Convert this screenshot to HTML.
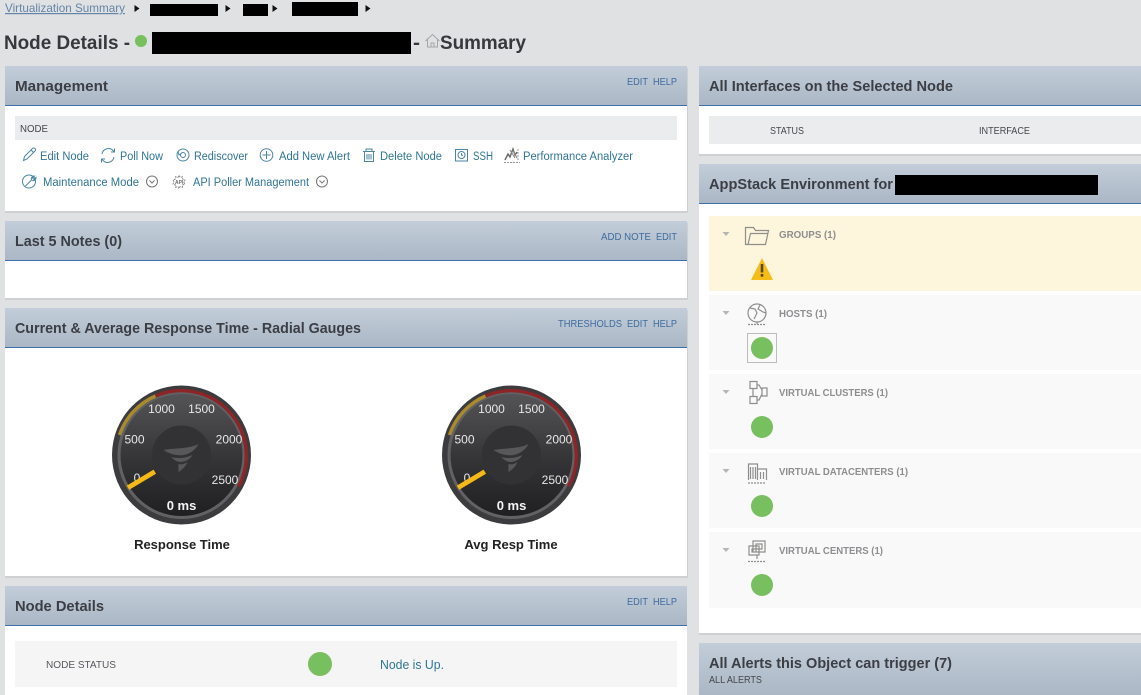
<!DOCTYPE html>
<html><head><meta charset="utf-8"><style>
html,body{margin:0;padding:0;background:#e0e1e3;overflow:hidden}
svg{display:block;position:absolute;left:0;top:0}
text{font-family:"Liberation Sans",sans-serif}
.h{font-size:15px;font-weight:bold;fill:#3b3e44}
.t{font-size:19px;font-weight:bold;fill:#35383d}
.l{font-size:10px;fill:#3e6c9e}
.a{font-size:11.5px;fill:#2f7596}
.s{font-size:10.5px;fill:#44474b}
.g{font-size:10px;font-weight:bold;fill:#8d8e90}
.n{font-size:12px;fill:#e8e8e8;text-anchor:middle}
.ic{fill:none;stroke:#4d86a3;stroke-width:1}
.ig{fill:none;stroke:#8e8e8c;stroke-width:1.2}
</style></head><body>
<svg width="1141" height="695" viewBox="0 0 1141 695" xmlns="http://www.w3.org/2000/svg">
<defs>
<linearGradient id="hd" x1="0" y1="0" x2="0" y2="1"><stop offset="0" stop-color="#c3cdda"/><stop offset="1" stop-color="#abb7c5"/></linearGradient>
<linearGradient id="gf" x1="0" y1="0" x2="0" y2="1"><stop offset="0" stop-color="#555557"/><stop offset=".55" stop-color="#343436"/><stop offset="1" stop-color="#1f1f21"/></linearGradient>
<g id="gauge">
<circle cx="0" cy="0" r="69.5" fill="#3c3c3f"/>
<circle cx="0" cy="0" r="62.500" fill="url(#gf)" stroke="#626265" stroke-width="3"/>
<path d="M-62,-20 A65,65 0 0 1 -26,-59" fill="none" stroke="#a98a2c" stroke-width="3.400"/>
<path d="M-26,-59 A65,65 0 0 1 57,31.5" fill="none" stroke="#8c2527" stroke-width="3.400"/>
<circle cx="0" cy="0" r="29.5" fill="#323234"/>
<path d="M-18,-5 C-8,-7 8,-6 17,-11 C14,-5 8,-1 2,0 C-5,1 -12,-1 -18,-5Z M-10,2 C-4,4 5,3 11,0 C8,5 3,7 -1,7 C-4,7 -8,5 -10,2Z M-3,9 C0,10 3,9 6,7 C4,12 0,15 -3,17 C-3,14 -3,12 -3,9Z" fill="#58585a"/>
<text class="n" x="-47" y="-11.5">500</text>
<text class="n" x="-20" y="-42">1000</text>
<text class="n" x="20" y="-42">1500</text>
<text class="n" x="47.5" y="-11.5">2000</text>
<text class="n" x="43.5" y="29">2500</text>
<text class="n" x="-44.5" y="27">0</text>
<line x1="-53.500" y1="32.700" x2="-26.700" y2="16.700" stroke="#f6b816" stroke-width="4.800"/>
<text x="0" y="55" text-anchor="middle" style="font-size:13px;font-weight:bold;fill:#f4f4f4">0 ms</text>
</g>
</defs>

<rect width="1141" height="695" fill="#e0e1e3"/>

<!-- breadcrumb -->
<text x="5" y="12" style="font-size:12px;fill:#6484a8;text-decoration:underline" textLength="120" lengthAdjust="spacingAndGlyphs">Virtualization Summary</text>
<path d="M134.500,5l5,3.500l-5,3.500z M225.500,5l5,3.500l-5,3.500z M272.500,5l5,3.500l-5,3.500z M365.500,5l5,3.500l-5,3.500z" fill="#111"/>
<rect x="150" y="4" width="68" height="12" fill="#000"/>
<rect x="243" y="4" width="25" height="12" fill="#000"/>
<rect x="292" y="2" width="66" height="14" fill="#000"/>

<!-- title -->
<text class="t" x="4" y="49" textLength="126" lengthAdjust="spacingAndGlyphs">Node Details -</text>
<circle cx="141" cy="41" r="6" fill="#77bf5f"/>
<rect x="152" y="32" width="259" height="22" fill="#000"/>
<text class="t" x="413" y="49" textLength="7" lengthAdjust="spacingAndGlyphs">-</text>
<path d="M425.500,41l7,-6.500l7,6.500M427.500,39.500v7.500h10v-7.500M431,47v-4h3v4" fill="none" stroke="#a5a5a5" stroke-width="1"/>
<text class="t" x="440" y="49" textLength="86" lengthAdjust="spacingAndGlyphs">Summary</text>

<!-- left panels -->
<rect x="5" y="68" width="683" height="145" fill="#cfd0d2"/>
<rect x="5" y="66" width="682" height="145" fill="#fff"/>
<rect x="5" y="66" width="682" height="39" fill="url(#hd)"/>
<rect x="5" y="105" width="682" height="1" fill="#3f70ae"/>
<text class="h" x="15" y="91" textLength="93" lengthAdjust="spacingAndGlyphs">Management</text>
<text class="l" x="627" y="85" textLength="21" lengthAdjust="spacingAndGlyphs">EDIT</text>
<text class="l" x="653" y="85" textLength="24" lengthAdjust="spacingAndGlyphs">HELP</text>
<rect x="15" y="116" width="662" height="24" fill="#ebecee"/>
<text class="s" x="20" y="132" textLength="28" lengthAdjust="spacingAndGlyphs">NODE</text>

<!-- action icons -->
<path class="ic" d="M23.500,160.500l1,-4l8,-8a1.500,1.500 0 0 1 2.500,2.500l-8,8z M31,150l2.500,2.500"/>
<path class="ic" d="M102,154a6.500,6.500 0 0 1 11,-3.500l1.500,1.500M114,157a6.500,6.500 0 0 1 -11,3.500l-1.500,-1.500M114.500,148.500v3.500h-3.500M101.500,162.500v-3.500h3.500"/>
<circle class="ic" cx="183" cy="155" r="6"/><circle class="ic" cx="183" cy="155" r="2.500"/><path class="ic" d="M178,151l1,4l3,-2"/>
<circle class="ic" cx="266.500" cy="155" r="6.300"/><path class="ic" d="M266.500,151v8M262.500,155h8"/>
<path class="ic" d="M363,151.500h12M366,151.500v-2.500h6v2.500M364.500,151.500v10h9v-10M367,154v5.500M369,154v5.500M371,154v5.500"/>
<rect class="ic" x="455.500" y="149.500" width="12" height="11.500"/><circle class="ic" cx="461.500" cy="155" r="3.500"/><path class="ic" d="M461.500,153v2.200h1.500"/>
<path d="M505,160l3,-6l2,3l3,-8l2,6l2,-3" fill="none" stroke="#666" stroke-width="1.400"/><path d="M510,150l5,8M513,150l4,8" fill="none" stroke="#888" stroke-width="1"/><path d="M518,149v11M504,162.500h16" fill="none" stroke="#999" stroke-width="1" stroke-dasharray="2 1"/>
<circle class="ic" cx="29" cy="181.500" r="6.500"/><path class="ic" d="M25.500,186l6,-6a3,3 0 0 1 3,-4l-2,2l1.500,1.500l2,-2a3,3 0 0 1 -4,3"/>
<path d="M179,175.500l1.200,2l2.300,-.7l.2,2.300l2.300,.9l-1.300,2l1.300,2l-2.300,.9l-.2,2.300l-2.300,-.7l-1.200,2l-1.200,-2l-2.300,.7l-.2,-2.300l-2.300,-.9l1.300,-2l-1.300,-2l2.300,-.9l.2,-2.300l2.300,.7z" fill="none" stroke="#888" stroke-width="1" stroke-dasharray="2 1"/>
<text x="175" y="184" style="font-size:5px;font-weight:bold;fill:#666">API</text>
<circle class="ic" cx="152" cy="181.500" r="5.500" style="stroke:#777"/><path d="M149.500,180.500l2.500,2.500l2.500,-2.500" fill="none" stroke="#777"/>
<circle class="ic" cx="322" cy="181.500" r="5.500" style="stroke:#777"/><path d="M319.500,180.500l2.500,2.500l2.500,-2.500" fill="none" stroke="#777"/>

<text class="a" x="40" y="160" textLength="49" lengthAdjust="spacingAndGlyphs">Edit Node</text>
<text class="a" x="120" y="160" textLength="43" lengthAdjust="spacingAndGlyphs">Poll Now</text>
<text class="a" x="194" y="160" textLength="54" lengthAdjust="spacingAndGlyphs">Rediscover</text>
<text class="a" x="279" y="160" textLength="71" lengthAdjust="spacingAndGlyphs">Add New Alert</text>
<text class="a" x="380" y="160" textLength="62" lengthAdjust="spacingAndGlyphs">Delete Node</text>
<text class="a" x="473" y="160" textLength="20" lengthAdjust="spacingAndGlyphs">SSH</text>
<text class="a" x="523" y="160" textLength="110" lengthAdjust="spacingAndGlyphs">Performance Analyzer</text>
<text class="a" x="43" y="186" textLength="96" lengthAdjust="spacingAndGlyphs">Maintenance Mode</text>
<text class="a" x="193" y="186" textLength="116" lengthAdjust="spacingAndGlyphs">API Poller Management</text>

<rect x="5" y="223" width="683" height="77" fill="#cfd0d2"/>
<rect x="5" y="221" width="682" height="77" fill="#fff"/>
<rect x="5" y="221" width="682" height="39" fill="url(#hd)"/>
<rect x="5" y="260" width="682" height="1" fill="#3f70ae"/>
<text class="h" x="15" y="246" textLength="107" lengthAdjust="spacingAndGlyphs">Last 5 Notes (0)</text>
<text class="l" x="601" y="240" textLength="50" lengthAdjust="spacingAndGlyphs">ADD NOTE</text>
<text class="l" x="656" y="240" textLength="21" lengthAdjust="spacingAndGlyphs">EDIT</text>

<rect x="5" y="310" width="683" height="268" fill="#cfd0d2"/>
<rect x="5" y="308" width="682" height="268" fill="#fff"/>
<rect x="5" y="308" width="682" height="39" fill="url(#hd)"/>
<rect x="5" y="347" width="682" height="1" fill="#3f70ae"/>
<text class="h" x="15" y="333" textLength="346" lengthAdjust="spacingAndGlyphs">Current &amp; Average Response Time - Radial Gauges</text>
<text class="l" x="558" y="327" textLength="64" lengthAdjust="spacingAndGlyphs">THRESHOLDS</text>
<text class="l" x="627" y="327" textLength="21" lengthAdjust="spacingAndGlyphs">EDIT</text>
<text class="l" x="653" y="327" textLength="24" lengthAdjust="spacingAndGlyphs">HELP</text>

<use href="#gauge" x="181.500" y="455"/>
<use href="#gauge" x="511.500" y="455"/>
<text x="182" y="549" text-anchor="middle" style="font-size:13px;font-weight:bold;fill:#222">Response Time</text>
<text x="511" y="549" text-anchor="middle" style="font-size:13px;font-weight:bold;fill:#222">Avg Resp Time</text>

<rect x="5" y="586" width="682" height="109" fill="#fff"/>
<rect x="5" y="586" width="682" height="39" fill="url(#hd)"/>
<rect x="5" y="625" width="682" height="1" fill="#3f70ae"/>
<text class="h" x="15" y="611" textLength="89" lengthAdjust="spacingAndGlyphs">Node Details</text>
<text class="l" x="627" y="605" textLength="21" lengthAdjust="spacingAndGlyphs">EDIT</text>
<text class="l" x="653" y="605" textLength="24" lengthAdjust="spacingAndGlyphs">HELP</text>
<rect x="15" y="641" width="662" height="46" fill="#f5f5f5"/>
<text x="46" y="668" style="font-size:10.500px;fill:#55585c" textLength="70" lengthAdjust="spacingAndGlyphs">NODE STATUS</text>
<circle cx="320" cy="664" r="12" fill="#77bf5f"/>
<text x="380" y="669" style="font-size:12.500px;fill:#2f7596" textLength="64" lengthAdjust="spacingAndGlyphs">Node is Up.</text>

<!-- right panels -->
<rect x="699" y="68" width="442" height="88" fill="#cfd0d2"/>
<rect x="699" y="66" width="442" height="88" fill="#fff"/>
<rect x="699" y="66" width="442" height="39" fill="url(#hd)"/>
<rect x="699" y="105" width="442" height="1" fill="#3f70ae"/>
<text class="h" x="709" y="91" textLength="244" lengthAdjust="spacingAndGlyphs">All Interfaces on the Selected Node</text>
<rect x="709" y="116" width="432" height="28" fill="#ebecee"/>
<text class="s" x="770" y="134" textLength="34" lengthAdjust="spacingAndGlyphs">STATUS</text>
<text class="s" x="979" y="134" textLength="51" lengthAdjust="spacingAndGlyphs">INTERFACE</text>

<rect x="699" y="166" width="442" height="469" fill="#cfd0d2"/>
<rect x="699" y="164" width="442" height="469" fill="#fff"/>
<rect x="699" y="164" width="442" height="39" fill="url(#hd)"/>
<rect x="699" y="203" width="442" height="1" fill="#3f70ae"/>
<text class="h" x="709" y="189" textLength="184" lengthAdjust="spacingAndGlyphs">AppStack Environment for</text>
<rect x="895" y="175" width="203" height="20" fill="#000"/>

<rect x="709" y="216" width="432" height="75" fill="#fdf5dc"/>
<rect x="709" y="295" width="432" height="75" fill="#f9f9fa"/>
<rect x="709" y="374" width="432" height="75" fill="#f9f9fa"/>
<rect x="709" y="453" width="432" height="75" fill="#f9f9fa"/>
<rect x="709" y="532" width="432" height="76" fill="#f9f9fa"/>

<path d="M722.500,232h7l-3.500,4z M722.500,311h7l-3.500,4z M722.500,390h7l-3.500,4z M722.500,469h7l-3.500,4z M722.500,548h7l-3.500,4z" fill="#b5b5b5"/>

<text class="g" x="779" y="238" textLength="57" lengthAdjust="spacingAndGlyphs">GROUPS (1)</text>
<text class="g" x="779" y="317" textLength="48" lengthAdjust="spacingAndGlyphs">HOSTS (1)</text>
<text class="g" x="779" y="396" textLength="109" lengthAdjust="spacingAndGlyphs">VIRTUAL CLUSTERS (1)</text>
<text class="g" x="779" y="475" textLength="129" lengthAdjust="spacingAndGlyphs">VIRTUAL DATACENTERS (1)</text>
<text class="g" x="779" y="554" textLength="104" lengthAdjust="spacingAndGlyphs">VIRTUAL CENTERS (1)</text>

<!-- group icons -->
<path class="ig" d="M745.500,244.500v-17h8l2,3h13l-3,14z M748,244.500l2.500,-11h17.500"/>
<circle class="ig" cx="757" cy="313" r="9"/><path class="ig" d="M750,308l5,1l2,4l-3,6M760,305l-2,4l5,3l3,1M757,322v2"/><path class="ig" d="M748,324.500h18" stroke-dasharray="2 1"/>
<path class="ig" d="M750,381.500h7v7h-7zM750,396.500h7v7h-7zM762,388h5v8h-5zM757,385h2l3,5M757,400h2l3,-6M753,388.500v8"/>
<path class="ig" d="M748.500,480v-16h9v16M757.500,469h9v11M750.500,467v12M753,467v12M755.500,467v12M760.500,472v7M763.500,472v7"/><path class="ig" d="M748,483h18" stroke-dasharray="2 1"/>
<path class="ig" d="M753,541h12v11h-12zM756,544h6v5h-6zM749,546h10v9h-10zM752,549h4v3h-4zM757,555v4"/><path class="ig" d="M748,561.500h18" stroke-dasharray="2 1"/>

<path d="M762,258l11,22h-22z" fill="#f6bd16"/>
<rect x="760.700" y="264" width="2.600" height="8.500" fill="#5a4a1c"/><rect x="760.700" y="274" width="2.600" height="2.700" fill="#5a4a1c"/>
<rect x="747.500" y="333.500" width="29" height="29" fill="none" stroke="#bdbdbd"/>
<circle cx="762" cy="348" r="11" fill="#77bf5f"/>
<circle cx="762" cy="427" r="11" fill="#77bf5f"/>
<circle cx="762" cy="506" r="11" fill="#77bf5f"/>
<circle cx="762" cy="585" r="11" fill="#77bf5f"/>

<rect x="699" y="643" width="442" height="52" fill="url(#hd)"/>
<text class="h" x="709" y="668" textLength="243" lengthAdjust="spacingAndGlyphs">All Alerts this Object can trigger (7)</text>
<text class="s" x="709" y="683" textLength="53" lengthAdjust="spacingAndGlyphs">ALL ALERTS</text>
</svg>
</body></html>
